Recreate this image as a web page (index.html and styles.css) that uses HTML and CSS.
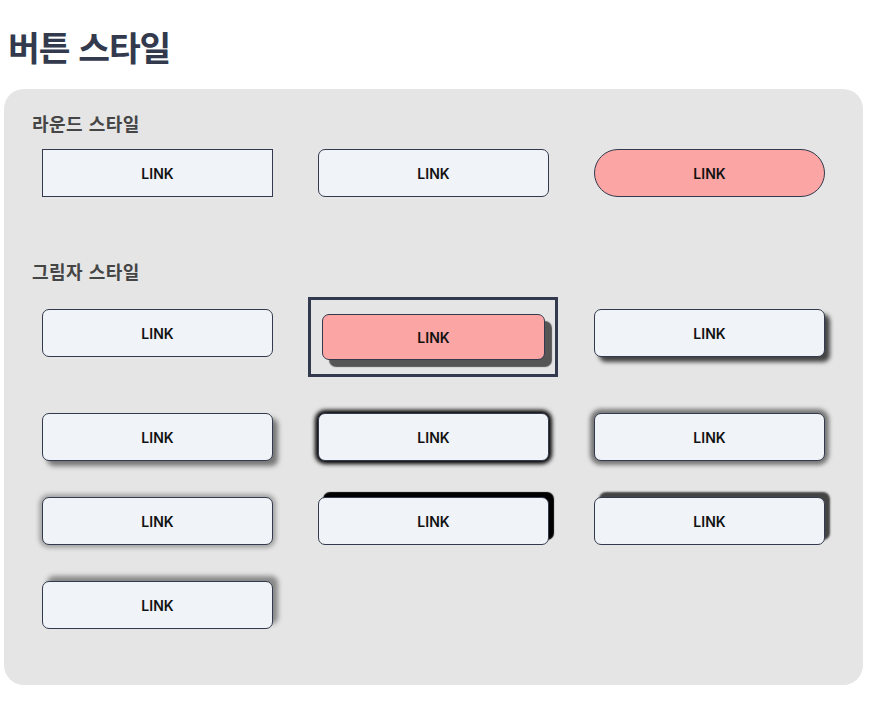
FILE: index.html
```html
<!DOCTYPE html>
<html lang="ko">
<head>
<meta charset="utf-8">
<title>버튼 스타일</title>
<link rel="stylesheet" href="styles.css">
</head>
<body>
<h1 class="page-title">버튼 스타일</h1>
<main class="panel">
  <section class="group">
    <h2 class="group-title">라운드 스타일</h2>
    <div class="grid">
      <button class="btn btn-square">LINK</button>
      <button class="btn btn-rounded">LINK</button>
      <button class="btn btn-pill">LINK</button>
    </div>
  </section>
  <section class="group group-shadow">
    <h2 class="group-title">그림자 스타일</h2>
    <div class="grid">
      <button class="btn btn-rounded in-tall-row">LINK</button>
      <div class="focus-frame">
        <button class="btn btn-rounded btn-pink sh-hard">LINK</button>
      </div>
      <button class="btn btn-rounded in-tall-row sh-dark">LINK</button>

      <button class="btn btn-rounded sh-soft">LINK</button>
      <button class="btn btn-rounded sh-glow-black">LINK</button>
      <button class="btn btn-rounded sh-glow-grey">LINK</button>

      <button class="btn btn-rounded sh-glow-light">LINK</button>
      <button class="btn btn-rounded sh-up-black">LINK</button>
      <button class="btn btn-rounded sh-up-grey">LINK</button>

      <button class="btn btn-rounded sh-up-soft">LINK</button>
    </div>
  </section>
</main>
</body>
</html>
```

FILE: styles.css
```css
* { box-sizing: border-box; }

body {
  margin: 0;
  background: #ffffff;
  font-family: "Noto Sans CJK KR", "Noto Sans", sans-serif;
}

.page-title {
  margin: 0;
  padding: 21px 0 0 8px;
  height: 89px;
  font-size: 34.5px;
  font-weight: 700;
  letter-spacing: -1px;
  line-height: 50px;
  color: #333a4d;
}

.panel {
  margin: 0 10px 0 4px;
  width: 859px;
  background: #e5e5e5;
  border-radius: 20px;
  padding: 20px 28px 56px 28px;
}

.group-shadow { margin-top: 60px; }

.group-title {
  margin: 0;
  font-size: 18px;
  line-height: 28px;
  font-weight: 700;
  color: #454545;
  letter-spacing: 0.5px;
}

.grid {
  display: grid;
  grid-template-columns: repeat(3, 231px);
  column-gap: 45px;
  row-gap: 36px;
  align-items: start;
  margin: 12px 0 0 10px;
}

.btn {
  display: flex;
  align-items: center;
  justify-content: center;
  width: 231px;
  height: 48px;
  padding: 0;
  background: #f0f3f8;
  border: 1px solid #333a4d;
  font-family: Inter, "Noto Sans", sans-serif;
  font-size: 14px;
  font-weight: 600;
  color: #111111;
  cursor: pointer;
}

.btn-square { border-radius: 0; }
.btn-rounded { border-radius: 7px; }
.btn-pill { border-radius: 24px; background: #fca5a5; }
.btn-pink { background: #fca5a5; }

.in-tall-row { margin-top: 12px; }

.focus-frame {
  width: 250px;
  height: 80px;
  margin-left: -10px;
  border: 3px solid #333a4d;
  padding: 14px 10px 14px 11px;
}
.focus-frame .btn { width: 100%; height: 100%; }

.sh-hard { box-shadow: 7px 7px 1px #555555; }
.sh-dark { box-shadow: 5px 5px 4px #444444; }
.sh-soft { box-shadow: 5px 5px 5px #777777; }
.sh-glow-black { box-shadow: 0 0 4px 3px #000000; }
.sh-glow-grey { box-shadow: 0 0 4px 4px #777777; }
.sh-glow-light { box-shadow: 0 0 4px 3px #a5a5a5; }
.sh-up-black { box-shadow: 5px -5px 1px #000000; }
.sh-up-grey { box-shadow: 5px -5px 2px #444444; }
.sh-up-soft { box-shadow: 5px -5px 5px #888888; }
```
